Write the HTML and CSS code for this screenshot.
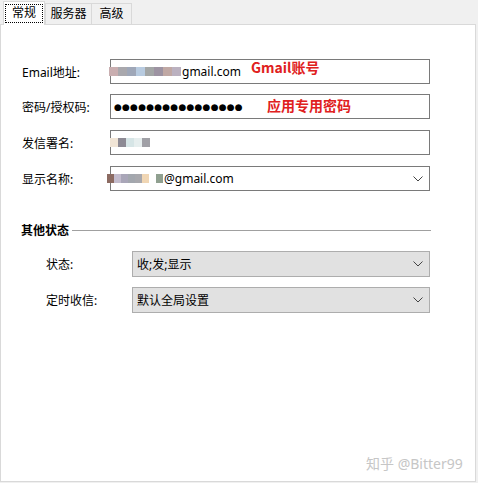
FILE: index.html
```html
<!DOCTYPE html>
<html>
<head>
<meta charset="utf-8">
<link rel="stylesheet" href="styles.css">
</head>
<body>
<div class="window">
  <div class="tabs">
    <div class="tab active"><span class="focus">常规</span></div>
    <div class="tab">服务器</div>
    <div class="tab">高级</div>
  </div>
  <div class="panel">
    <div class="form">
      <div class="row">
        <label class="lbl">Email地址:</label>
        <div class="field">
          <span class="mosaic m1"><i style="background:#c9aeb0"></i><i style="background:#a9a8ad"></i><i style="background:#9fa7b8"></i><i style="background:#b8cbe0"></i><i style="background:#a3a6a6"></i><i style="background:#9d93a2"></i><i style="background:#c0a8a4"></i><i style="background:#bbb1c0"></i></span><span class="val">gmail.com</span>
          <span class="note n1">Gmail账号</span>
        </div>
      </div>
      <div class="row">
        <label class="lbl">密码/授权码:</label>
        <div class="field">
          <span class="dots">●●●●●●●●●●●●●●●●</span>
          <span class="note n2">应用专用密码</span>
        </div>
      </div>
      <div class="row">
        <label class="lbl">发信署名:</label>
        <div class="field">
          <span class="mosaic m3"><i style="background:#f1e5d6"></i><i style="background:#8d8a94"></i><i style="background:#d6e5e6"></i><i style="background:#e6eeee"></i><i style="background:#a0a0a6"></i></span>
        </div>
      </div>
      <div class="row">
        <label class="lbl">显示名称:</label>
        <div class="field">
          <span class="mosaic m4"><i style="background:#8c6b62"></i><i style="background:#c3bccd"></i><i style="background:#a9a6b8"></i><i style="background:#a3a7ae"></i><i style="background:#a8a8ad"></i><i style="background:#f0d6b4"></i><i style="background:#fff"></i><i style="background:#90a090"></i></span><span class="val">@gmail.com</span>
          <svg class="chev" width="10" height="6" viewBox="0 0 10 6"><path d="M0.5 0.5 L5 5 L9.5 0.5" fill="none" stroke="#444" stroke-width="1"/></svg>
        </div>
      </div>
    </div>

    <div class="section">
      <span class="section-title">其他状态</span>
      <span class="section-line"></span>
    </div>

    <div class="form2">
      <div class="row2">
        <label class="lbl2">状态:</label>
        <div class="select">收;发;显示
          <svg class="chev" width="10" height="6" viewBox="0 0 10 6"><path d="M0.5 0.5 L5 5 L9.5 0.5" fill="none" stroke="#444" stroke-width="1"/></svg>
        </div>
      </div>
      <div class="row2">
        <label class="lbl2">定时收信:</label>
        <div class="select">默认全局设置
          <svg class="chev" width="10" height="6" viewBox="0 0 10 6"><path d="M0.5 0.5 L5 5 L9.5 0.5" fill="none" stroke="#444" stroke-width="1"/></svg>
        </div>
      </div>
    </div>

    <div class="watermark">知乎 @Bitter99</div>
  </div>
</div>
</body>
</html>
```
FILE: styles.css
```css
html, body {
  margin: 0;
  padding: 0;
  background: #f0f0f0;
  font-family: "Noto Sans", "Noto Sans CJK SC", sans-serif;
  font-size: 12px;
  color: #000;
}
.window {
  width: 478px;
  height: 483px;
  position: relative;
}
.tabs {
  display: flex;
  padding-left: 3px;
  height: 24px;
  align-items: flex-end;
}
.tab {
  height: 22px;
  box-sizing: border-box;
  border: 1px solid #d9d9d9;
  border-bottom: none;
  border-left: none;
  background: #f0f0f0;
  display: flex;
  align-items: center;
  justify-content: center;
  white-space: nowrap;
  line-height: 1;
  position: relative;
  top: 1px;
  padding-bottom: 1px;
}
.tab:nth-child(2) { border-left: 1px solid #d9d9d9; width: 47px; }
.tab:nth-child(3) { width: 40px; }
.tab.active {
  height: 24px;
  width: 42px;
  background: #fff;
  border: 1px solid #d9d9d9;
  border-bottom: none;
  padding: 1px 1px 2px 1px;
  z-index: 2;
}
.focus {
  display: flex;
  align-items: center;
  justify-content: center;
  width: 100%;
  height: 19px;
  border: 1px dotted #000;
  box-sizing: border-box;
}
.panel {
  position: relative;
  background: #fff;
  border: 1px solid #d9d9d9;
  width: 476px;
  height: 458px;
  box-sizing: border-box;
}
.form {
  padding: 34px 0 0 21px;
  display: flex;
  flex-direction: column;
  gap: 11px;
}
.row {
  display: flex;
  align-items: center;
}
.row:first-child { margin-bottom: -1px; }
.lbl { width: 88px; }
.field {
  position: relative;
  width: 320px;
  height: 25px;
  box-sizing: border-box;
  border: 1px solid #7a7a7a;
  display: flex;
  align-items: center;
  padding-left: 2px;
}
.val { font-size: 12px; }
.mosaic { display: inline-flex; }
.mosaic i { display: block; width: 9px; height: 9px; }
.m1 { margin-left: -4px; margin-right: 1px; }
.m3 { margin-left: -3px; }
.m3 i { width: 8px; }
.m4 { margin-left: -6px; margin-right: 1px; }
.m4 i { width: 7px; }
.dots {
  font-family: "DejaVu Sans", sans-serif;
  font-size: 9px;
  letter-spacing: 0.2px;
  padding-left: 1px;
}
.note {
  position: absolute;
  color: #e02020;
  font-weight: bold;
  font-size: 14px;
  font-family: "Noto Sans CJK SC", "Noto Sans", sans-serif;
  text-shadow: 1px 0 #fff, -1px 0 #fff, 0 1px #fff, 0 -1px #fff, 1px 1px #fff, -1px -1px #fff, 1px -1px #fff, -1px 1px #fff;
}
.n1 { left: 140px; top: -3px; }
.n2 { left: 156px; top: 0px; }
.chev {
  position: absolute;
  right: 6px;
  top: 9px;
}
.section {
  display: flex;
  align-items: center;
  margin: 30px 0 0 20px;
  width: 410px;
}
.section-title { font-weight: bold; }
.section-line {
  flex: 1;
  height: 1px;
  background: #a0a0a0;
  margin-left: 3px;
}
.form2 {
  padding: 12px 0 0 45px;
  display: flex;
  flex-direction: column;
  gap: 10px;
}
.row2 { display: flex; align-items: center; }
.lbl2 { width: 86px; }
.select {
  position: relative;
  width: 298px;
  height: 26px;
  box-sizing: border-box;
  border: 1px solid #adadad;
  background: #e1e1e1;
  display: flex;
  align-items: center;
  padding-left: 4px;
}
.select .chev { right: 6px; top: 9px; }
.watermark {
  position: absolute;
  left: 365px;
  top: 428px;
  color: #c6c6c6;
  font-size: 14px;
  font-family: "Noto Sans", "Noto Sans CJK SC", sans-serif;
}
```
